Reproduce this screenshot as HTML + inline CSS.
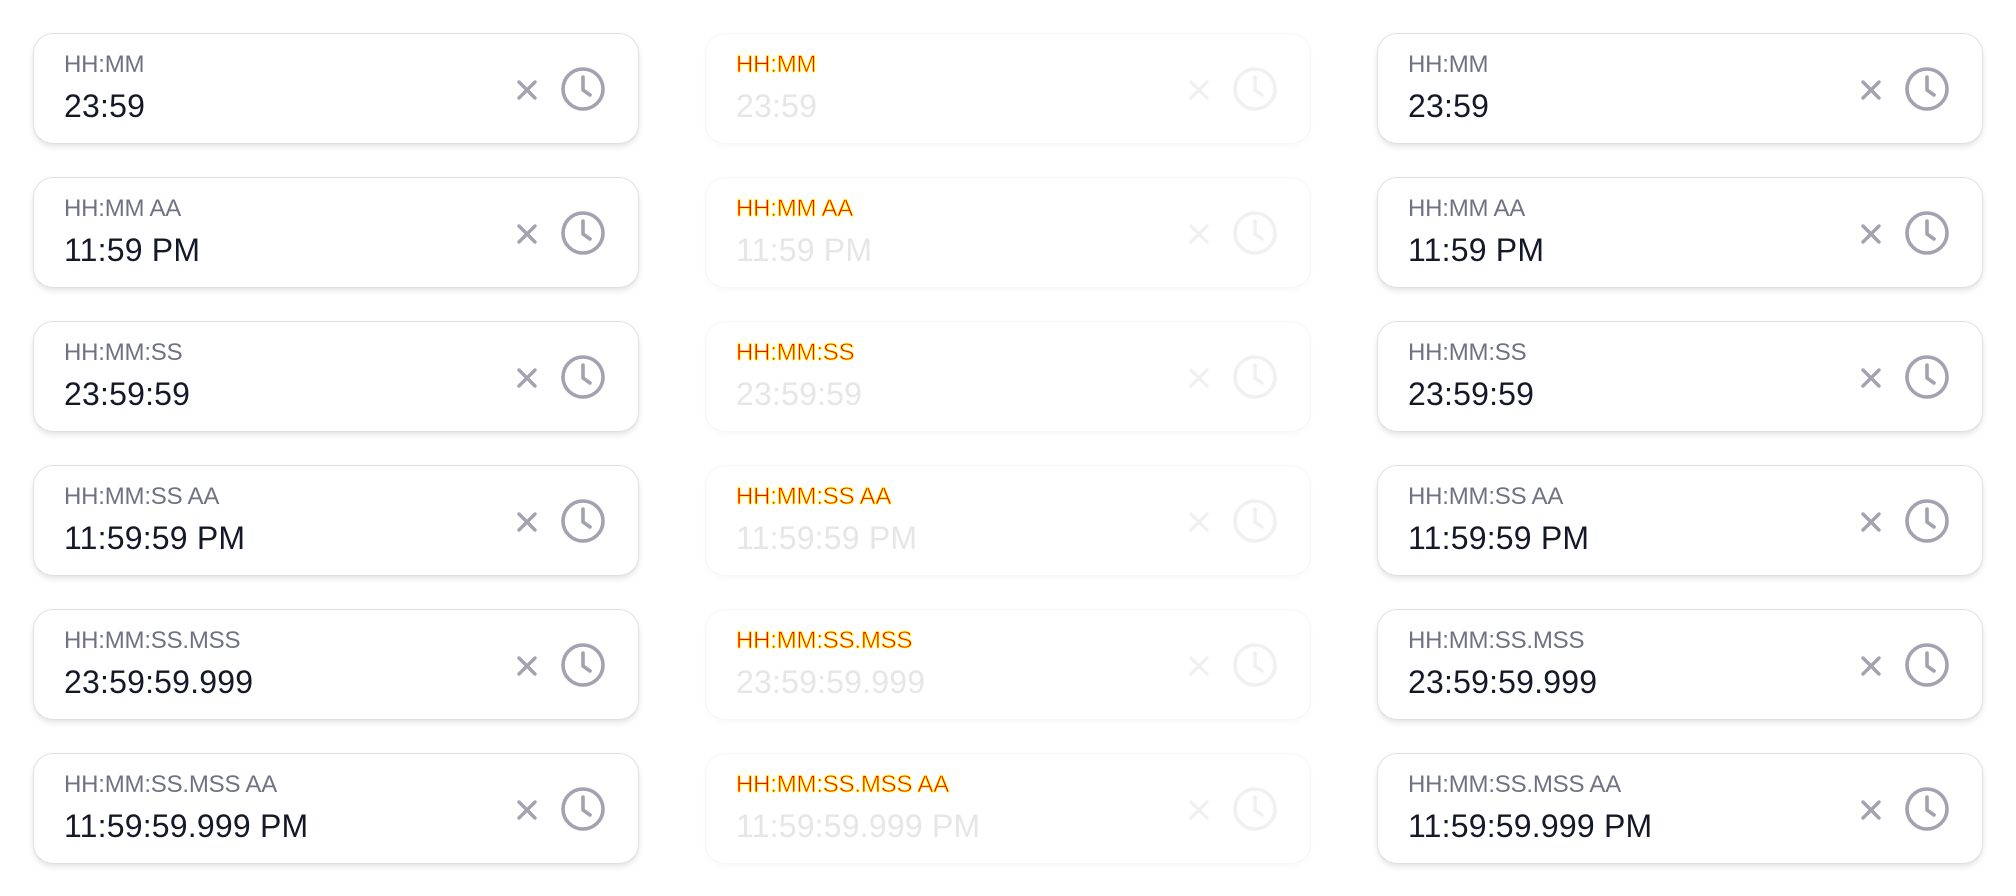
<!DOCTYPE html>
<html><head><style>
body{margin:0;width:2016px;height:896px;background:#fff;font-family:"Liberation Sans",sans-serif;position:relative;overflow:hidden}
.c{position:absolute;width:606px;height:111px;border:1px solid #e0e0e3;border-radius:20px;box-shadow:0 3px 6px rgba(0,0,0,.1);background:#fff;box-sizing:border-box}
.l{position:absolute;left:30px;top:17px;font-size:24px;color:#6f7282;letter-spacing:-0.2px}
.v{position:absolute;left:30px;top:54px;font-size:32px;color:#151828;letter-spacing:0.2px}
.x{position:absolute;left:482px;top:45px}
.k{position:absolute;left:526px;top:32px}
.f{border-color:#f6f6f6;box-shadow:0 3px 6px rgba(0,0,0,.025)}
.f .l{color:#f00;-webkit-text-stroke:0.8px #ff0;letter-spacing:-0.2px}
.f .v{color:#e6e6e6}
.f svg{opacity:.15}
</style></head><body>
<div id="root"></div>
<script>
const rows=[["HH:MM","23:59"],["HH:MM AA","11:59 PM"],["HH:MM:SS","23:59:59"],["HH:MM:SS AA","11:59:59 PM"],["HH:MM:SS.MSS","23:59:59.999"],["HH:MM:SS.MSS AA","11:59:59.999 PM"]];
const cols=[33,705,1377];let h="";
cols.forEach((x,ci)=>rows.forEach((r,i)=>{
h+=`<div class="c${ci==1?' f':''}" style="left:${x}px;top:${33+i*144}px"><div class="l">${r[0]}</div><div class="v">${r[1]}</div>
<svg class="x" width="22" height="22" viewBox="0 0 22 22"><path d="M3 3L19 19M19 3L3 19" stroke="#a2a2b0" stroke-width="3.4" stroke-linecap="round"/></svg>
<svg class="k" width="46" height="46" viewBox="0 0 46 46"><circle cx="23" cy="23" r="20" fill="none" stroke="#a2a2b0" stroke-width="3.6"/><path d="M23 11V24L30 29" fill="none" stroke="#a2a2b0" stroke-width="3.6" stroke-linecap="round" stroke-linejoin="round"/></svg></div>`;
}));
document.getElementById("root").innerHTML=h;
</script>
</body></html>
